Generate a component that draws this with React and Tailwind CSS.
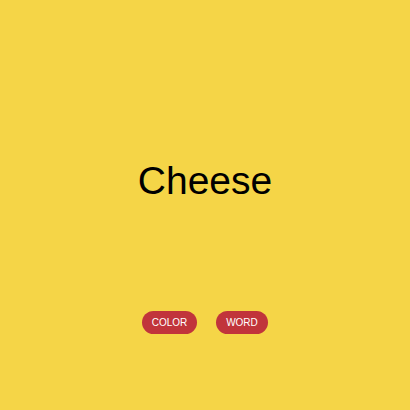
export default function App() {
  return (
    <div className="h-[410px] w-[410px] bg-[#f5d547] flex flex-col items-center font-['Liberation_Sans',Arial,sans-serif]">
      <div className="h-[334px] flex flex-col items-center">
        <h1 className="mt-[157px] text-[39px] leading-[48px] text-black">Cheese</h1>
        <div className="mt-auto flex gap-[19px]">
          <button className="h-[23px] w-[55px] rounded-full bg-[#c1343b] text-white text-[10px]">
            COLOR
          </button>
          <button className="h-[23px] w-[52px] rounded-full bg-[#c1343b] text-white text-[10px]">
            WORD
          </button>
        </div>
      </div>
    </div>
  )
}
